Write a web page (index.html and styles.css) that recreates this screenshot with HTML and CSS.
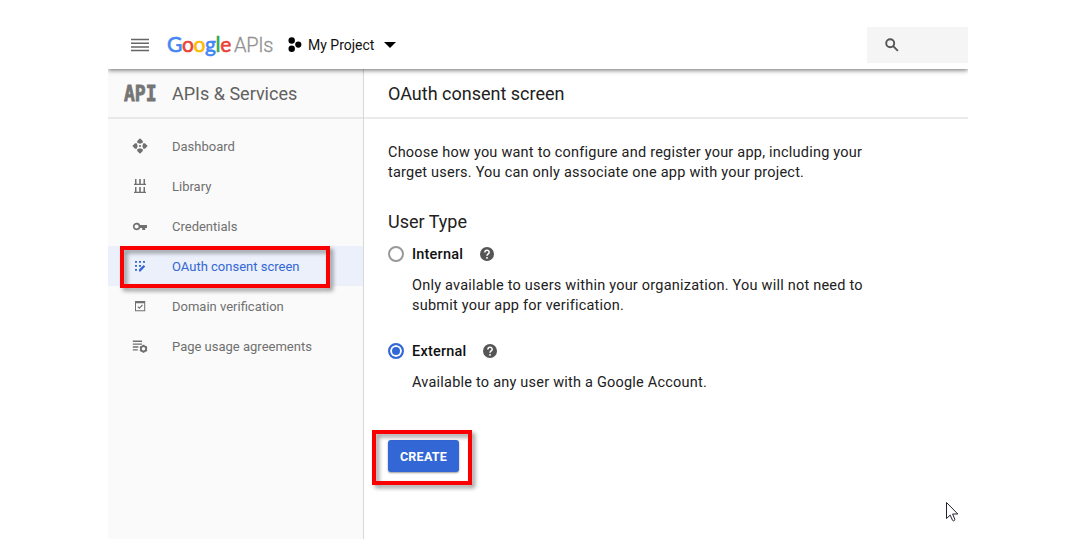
FILE: index.html
```html
<!DOCTYPE html>
<html lang="en">
<head>
<meta charset="utf-8">
<title>OAuth consent screen</title>
<link rel="stylesheet" href="styles.css">
</head>
<body>
<div class="console">
  <header class="topbar">
    <svg class="menu" viewBox="0 0 18 14"><path d="M0 1.500h18M0 5.200h18M0 8.900h18M0 12.600h18"/></svg>
    <div class="brand"><span class="google"><span class="b">G</span><span class="r">o</span><span class="y">o</span><span class="b">g</span><span class="g">l</span><span class="r">e</span></span><span class="apis">APIs</span></div>
    <svg class="project-icon" viewBox="0 0 14 16"><circle cx="3.7" cy="3.5" r="3.2"/><circle cx="3.7" cy="11.7" r="3.2"/><circle cx="10.3" cy="7.6" r="3.1"/></svg>
    <span class="project">My Project</span>
    <svg class="caret" viewBox="0 0 12 6"><path d="M0 0h12L6 6z"/></svg>
    <div class="search"><svg viewBox="0 0 14 14"><circle cx="5.2" cy="5.2" r="4"/><path d="M8.2 8.2l4.7 4.7"/></svg></div>
  </header>
  <div class="body">
    <aside class="sidebar">
      <div class="product"><span class="api">API</span><span class="product-name">APIs &amp; Services</span></div>
      <nav>
        <a class="item"><svg viewBox="0 0 16 16"><path d="M8 .3l2.800 2.800v1.600L8 5.700 5.200 4.700V3.100zM8 15.700l2.800-2.800v-1.600L8 10.300l-2.800 1v1.600zM.3 8l2.800-2.800h1.600L5.700 8l-1 2.800H3.100zM15.700 8l-2.800-2.800h-1.600L10.300 8l1 2.800h1.600z"/><circle cx="8" cy="8" r="1.100"/></svg><span>Dashboard</span></a>
        <a class="item"><svg viewBox="0 0 16 16"><path d="M3 1h1.500v4.800h2.700V1h1.600v4.800h2.700V1H13v4.800h1V7H2V5.800h1zM3 9h1.500v4.800h2.700V9h1.600v4.800h2.700V9H13v4.800h1V15H2v-1.200h1z"/></svg><span>Library</span></a>
        <a class="item"><svg viewBox="0 0 16 16"><path fill-rule="evenodd" d="M8.200 7A3.800 3.800 0 1 0 8.200 9.900h2V12h3V9.900H15V7zM4.600 6.400a2.100 2.100 0 1 1 0 4.200 2.100 2.100 0 0 1 0-4.200z"/></svg><span>Credentials</span></a>
        <a class="item active"><svg viewBox="0 0 16 16"><path d="M3 3h2v1.700H3zM7 3h2v1.700H7zM11 3h2v1.700h-2zM3 7h2v1.700H3zM7 7h2v1.700H7zM3 11h2v1.700H3z"/><path d="M7 13.500v-2l4.600-4.600 1.600 1.600-4.700 5z"/></svg><span>OAuth consent screen</span></a>
        <a class="item"><svg viewBox="0 0 16 16"><path fill-rule="evenodd" d="M3 3h10.200v10.300H3zM4 5.300v7h8.200v-7z"/><path class="line" d="M5.800 8.700l1.500 1.500L10.500 7"/></svg><span>Domain verification</span></a>
        <a class="item"><svg viewBox="0 0 16 16"><path d="M.8 2.500h9.200v1.400H.8zM.8 5.400h9.200v1.400H.8zM.8 8.300h5.600v1.400H.8zM.8 11.200h5v1.400h-5z"/><circle class="gear" cx="11.500" cy="10.800" r="2.600"/><path class="teeth" d="M11.500 6.800v1.700M11.500 13.100v1.700M8 8.900l1.400.800M13.600 11.900l1.400.800M8 12.700l1.400-.800M13.600 9.700l1.400-.800"/></svg><span>Page usage agreements</span></a>
      </nav>
    </aside>
    <main class="main">
      <h1><span>OAuth consent screen</span></h1>
      <div class="content">
        <p class="intro"><span>Choose how you want to configure and register your app, including your</span><br><span>target users. You can only associate one app with your project.</span></p>
        <h2>User Type</h2>
        <div class="choice"><i class="radio"></i><b class="int">Internal</b><svg class="help" viewBox="0 0 14 14"><circle cx="7" cy="7" r="7"/><path d="M4.900 5.400C4.900 2.400 9.200 2.600 9.200 5.200 9.200 6.900 7 6.900 7 8.700M7 10v1.700"/></svg></div>
        <p class="detail first"><span>Only available to users within your organization. You will not need to</span><br><span>submit your app for verification.</span></p>
        <div class="choice"><i class="radio on"></i><b class="ext">External</b><svg class="help" viewBox="0 0 14 14"><circle cx="7" cy="7" r="7"/><path d="M4.900 5.400C4.900 2.400 9.200 2.600 9.200 5.200 9.200 6.900 7 6.900 7 8.700M7 10v1.700"/></svg></div>
        <p class="detail"><span>Available to any user with a Google Account.</span></p>
        <button class="create">CREATE</button>
      </div>
    </main>
  </div>
</div>
<div class="mark mark-nav"></div>
<div class="mark mark-create"></div>
<svg class="cursor" viewBox="0 0 13 20"><path d="M.5.500v16l3.700-3.400 2.300 5.200c.8 1.200 2.700.400 2.300-1L6.600 12h5.200z"/></svg>
</body>
</html>
```
FILE: styles.css
```css
* { box-sizing: border-box; }
body { margin: 0; background: #fff; font-family: Roboto, "Liberation Sans", sans-serif; color: #212121; }
h1, h2, p { margin: 0; font-weight: 400; }
svg { display: block; flex: none; }
span, b { white-space: nowrap; }
.console { width: 860px; height: 528px; margin: 11px 0 0 108px; display: flex; flex-direction: column; overflow: hidden; }
.topbar { height: 58px; flex: none; display: flex; align-items: center; padding: 9px 0 0 23px; position: relative; z-index: 1; background: #fff; box-shadow: 0 1px 5px rgba(0,0,0,.6); }
.menu { width: 18px; height: 14px; stroke: #666; stroke-width: 1.5; fill: none; }
.brand { display: flex; align-items: baseline; margin-left: 18px; width: 121px; line-height: 22px; padding-bottom: 1px; }
.google { font: 400 21px/22px Lato, sans-serif; width: 67px; letter-spacing: -.35px; -webkit-text-stroke: .6px; }
.b { color: #4285f4; } .r { color: #ea4335; } .y { color: #fbbc05; } .g { color: #34a853; }
.apis { font-size: 20px; font-weight: 300; color: #909090; letter-spacing: -.3px; -webkit-text-stroke: .3px; }
.project-icon { width: 14px; height: 16px; fill: #000; }
.project { width: 76px; margin-left: 6px; font-size: 14px; color: #111; }
.caret { width: 12px; height: 6px; }
.search { width: 101px; height: 36px; margin-left: auto; background: #f5f5f5; padding: 11px 18px; }
.search svg { width: 14px; height: 14px; stroke: #555; stroke-width: 1.900; fill: none; }
.body { flex: 1; display: flex; }
.sidebar { width: 256px; background: #fafafa; border-right: 1px solid #d8d8d8; }
.product { height: 50px; border-bottom: 2px solid #e8e8e8; display: flex; align-items: center; padding-left: 16px; color: #616161; }
.api { width: 48px; font: bold 18px/20px "DejaVu Sans Mono", monospace; color: #757575; transform: translateY(1px) scaleY(1.200); -webkit-text-stroke: .7px; }
.product-name { font-size: 18px; }
nav { padding-top: 7px; }
.item { height: 40px; display: flex; align-items: center; padding-left: 24px; gap: 24px; font-size: 13px; line-height: 16px; color: #707070; }
.item span { padding-top: 1px; }
.item svg { width: 16px; height: 16px; fill: #707070; }
.item .line { fill: none; stroke: #707070; stroke-width: 1.100; }
.item .gear, .item .teeth { fill: none; stroke: #707070; stroke-width: 1.800; }
.item.active { background: #ebf0fa; color: #3367d6; }
.item.active svg { fill: #3367d6; }
.main { flex: 1; background: #fff; }
h1 { height: 50px; border-bottom: 2px solid #ebebeb; font-size: 18px; line-height: 49px; padding-left: 24px; }
.content { padding: 24px 24px 0; }
.intro, .detail { font-size: 14.500px; line-height: 20px; letter-spacing: .22px; }
h2 { font-size: 18px; line-height: 24px; margin-top: 27px; }
.choice { display: flex; align-items: center; height: 20px; margin-top: 10px; }
.radio { width: 16px; height: 16px; border: 2px solid #999; border-radius: 50%; }
.radio.on { border: 2px solid #3367d6; background: #3367d6; box-shadow: inset 0 0 0 2px #fff; }
.choice b { margin-left: 8px; font-size: 14.500px; font-weight: 500; color: #111; letter-spacing: .2px; }
.int { width: 68px; } .ext { width: 71px; }
.help { width: 14px; height: 14px; fill: #555; }
.help path { fill: none; stroke: #fff; stroke-width: 1.500; }
.detail { margin: 12px 0 0 24px; }
.first { margin-bottom: 25px; }
.create { display: block; width: 71px; height: 32px; margin-top: 47px; padding: 0; border: 0; border-radius: 3px; background: #3367d6; color: #fff; font: 700 12.500px Roboto, sans-serif; letter-spacing: .25px; box-shadow: 0 1px 2px rgba(0,0,0,.4); }
.mark { position: absolute; border: 4px solid #fa0000; filter: drop-shadow(3px 3px 2px rgba(0,0,0,.4)); }
.mark-nav { left: 120px; top: 246px; width: 210px; height: 42px; }
.mark-create { left: 372px; top: 430px; width: 100px; height: 55px; }
.cursor { position: absolute; left: 946px; top: 502px; width: 13px; height: 20px; fill: #fff; stroke: #223; stroke-width: 1; }
```
